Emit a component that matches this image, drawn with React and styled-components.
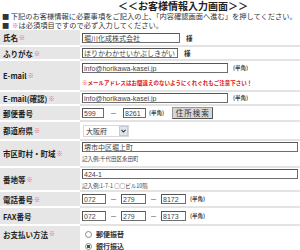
import React from 'react';
import styled, { createGlobalStyle } from 'styled-components';

const GlobalStyle = createGlobalStyle`
  html, body {
    margin: 0;
    padding: 0;
    background: #fff;
  }
  body {
    font-family: "Noto Sans CJK JP", sans-serif;
    color: #333;
  }
`;

const Page = styled.div`
  width: 300px;
  height: 250px;
  overflow: hidden;
`;

const Title = styled.h1`
  margin: 0;
  padding-left: 118px;
  font-size: 10px;
  line-height: 12px;
  font-weight: 700;
  color: #222;
  white-space: nowrap;
`;

const Lead = styled.p`
  margin: 0;
  padding-left: 2px;
  font-size: 7.25px;
  line-height: 9px;
  color: #333;
  white-space: nowrap;
`;

const Req = styled.span`
  color: #e8508a;
  font-size: ${p => p.$size || '6px'};
  margin-left: 1px;
`;

const Form = styled.div``;

const Row = styled.div`
  display: grid;
  grid-template-columns: 80px 1fr;
  height: ${p => p.$h}px;
`;

const Label = styled.div`
  box-sizing: border-box;
  background: #e6e6e6;
  border-bottom: 2px solid #fff;
  display: flex;
  align-items: ${p => (p.$top ? 'flex-start' : 'center')};
  padding: ${p => (p.$top ? '3px 0 0 3px' : '0 0 0 3px')};
  font-size: 7.5px;
  font-weight: 700;
  color: #1e1e1e;
  white-space: nowrap;
`;

const Cell = styled.div`
  box-sizing: border-box;
  border-bottom: 2px solid #e3e3e3;
  padding: ${p => p.$pad || '0 0 0 2px'};
  display: flex;
  flex-direction: column;
  justify-content: ${p => (p.$top ? 'flex-start' : 'center')};
  min-width: 0;
`;

const Line = styled.div`
  display: flex;
  align-items: center;
  white-space: nowrap;
  height: ${p => p.$h || 10}px;
`;

const Field = styled.input`
  box-sizing: border-box;
  width: ${p => p.$w || '100px'};
  height: 10px;
  margin: 0;
  padding: 0 1px;
  border: 1px solid #6e6e6e;
  border-top-color: #555;
  border-left-color: #555;
  background: #fff;
  font-family: "Liberation Sans", "Noto Sans CJK JP", sans-serif;
  font-size: 7px;
  color: #444;
  outline: none;
`;

const Sama = styled.span`
  margin-left: 6px;
  font-size: 6.5px;
  font-weight: 700;
  color: #333;
`;

const Small = styled.span`
  margin-left: ${p => p.$ml || '5px'};
  font-size: 5.5px;
  font-weight: 700;
  color: #444;
`;

const Dash = styled.span`
  margin: 0 ${p => p.$m || '5px'};
  font-size: 7px;
  color: #333;
`;

const Hint = styled.div`
  margin-top: ${p => p.$mt || '3px'};
  font-size: 5.5px;
  line-height: 7px;
  color: ${p => (p.$warn ? '#e01010' : '#444')};
  font-weight: ${p => (p.$warn ? 700 : 400)};
  white-space: nowrap;
`;

const SearchButton = styled.button`
  box-sizing: border-box;
  margin-left: 8px;
  width: 41px;
  height: 12px;
  padding: 0;
  background: #d6d6d6;
  border: 1px solid #555;
  border-top-color: #999;
  border-left-color: #999;
  font-family: "Noto Sans CJK JP", sans-serif;
  font-size: 7.5px;
  line-height: 10px;
  color: #333;
  letter-spacing: 1px;
`;

const Select = styled.div`
  box-sizing: border-box;
  width: 46px;
  height: 12px;
  margin-left: 1px;
  display: flex;
  align-items: center;
  justify-content: space-between;
  border: 1px solid #d8d8d8;
  background: #fff;
  font-size: 7px;
  color: #333;
  padding-left: 2px;
`;

const Arrow = styled.span`
  box-sizing: border-box;
  width: 9px;
  height: 10px;
  display: flex;
  align-items: center;
  justify-content: center;
  background: #dfe4ee;
  border: 1px solid #c4cad6;
`;

const Radios = styled.div`
  display: flex;
  flex-direction: column;
  gap: 4px;
  padding: 4px 0 0 3px;
`;

const RadioLine = styled.label`
  display: flex;
  align-items: center;
  height: 8px;
  font-size: 7px;
  font-weight: 700;
  color: #333;
`;

const Dot = styled.span`
  box-sizing: border-box;
  width: 7px;
  height: 7px;
  margin-right: 4px;
  border-radius: 50%;
  border: 1px solid #8a8a8a;
  background: ${p =>
    p.$on ? 'radial-gradient(circle, #1e6b3a 0 1.5px, #fff 2px)' : '#fff'};
`;

const Text = ({ children, w }) => <Field $w={w} value={children} readOnly />;

export default function App() {
  return (
    <Page>
      <GlobalStyle />
      <Title>＜＜お客様情報入力画面＞＞</Title>
      <Lead>■ 下記のお客様情報に必要事項をご記入の上、「内容確認画面へ進む」を押してください。</Lead>
      <Lead>■ <Req $size="6.5px">※</Req>は必須項目ですので必ず入力してください。</Lead>

      <Form>
        <Row $h={17}>
          <Label>氏名<Req>※</Req></Label>
          <Cell>
            <Line><Text w="98px">堀川化成株式会社</Text><Sama>様</Sama></Line>
          </Cell>
        </Row>
        <Row $h={14}>
          <Label>ふりがな<Req>※</Req></Label>
          <Cell>
            <Line><Text w="96px">ほりかわかせいかぶしきがいしゃ</Text><Sama>様</Sama></Line>
          </Cell>
        </Row>
        <Row $h={31}>
          <Label>E-mail<Req>※</Req></Label>
          <Cell $top $pad="2px 0 0 2px">
            <Line><Text w="146px">info@horikawa-kasei.jp</Text><Small>(半角)</Small></Line>
            <Hint $warn $mt="7px">※メールアドレスはお間違えのないようにくれぐれもご注意下さい！</Hint>
          </Cell>
        </Row>
        <Row $h={14}>
          <Label>E-mail(確認)<Req>※</Req></Label>
          <Cell>
            <Line><Text w="146px">info@horikawa-kasei.jp</Text><Small>(半角)</Small></Line>
          </Cell>
        </Row>
        <Row $h={16}>
          <Label>郵便番号</Label>
          <Cell>
            <Line $h={12}>
              <Text w="22px">599</Text>
              <Dash $m="6px">－</Dash>
              <Text w="23px">8261</Text>
              <Small $ml="3px">(半角)</Small>
              <SearchButton type="button">住所検索</SearchButton>
            </Line>
          </Cell>
        </Row>
        <Row $h={19}>
          <Label>都道府県<Req>※</Req></Label>
          <Cell>
            <Line $h={12}>
              <Select>
                大阪府
                <Arrow>
                  <svg width="5" height="4" viewBox="0 0 5 4">
                    <path d="M0.5 0.8 L2.5 3 L4.5 0.8" fill="none" stroke="#333" strokeWidth="1.1" />
                  </svg>
                </Arrow>
              </Select>
            </Line>
          </Cell>
        </Row>
        <Row $h={27}>
          <Label>市区町村・町域<Req>※</Req></Label>
          <Cell $top $pad="1px 2px 0 2px">
            <Line><Text w="100%">堺市中区堀上町</Text></Line>
            <Hint $mt="4px">記入例:千代田区永田町</Hint>
          </Cell>
        </Row>
        <Row $h={24}>
          <Label>番地等<Req>※</Req></Label>
          <Cell $top $pad="1px 2px 0 2px">
            <Line><Text w="100%">424-1</Text></Line>
            <Hint $mt="4px">記入例:1-7-1 ○○ビル10階</Hint>
          </Cell>
        </Row>
        <Row $h={16}>
          <Label>電話番号<Req>※</Req></Label>
          <Cell>
            <Line>
              <Text w="24px">072</Text>
              <Dash $m="4px">－</Dash>
              <Text w="25px">279</Text>
              <Dash $m="4px">－</Dash>
              <Text w="25px">8172</Text>
              <Small $ml="4px">(半角)</Small>
            </Line>
          </Cell>
        </Row>
        <Row $h={18}>
          <Label>FAX番号</Label>
          <Cell>
            <Line>
              <Text w="24px">072</Text>
              <Dash $m="4px">－</Dash>
              <Text w="25px">279</Text>
              <Dash $m="4px">－</Dash>
              <Text w="25px">8173</Text>
              <Small $ml="4px">(半角)</Small>
            </Line>
          </Cell>
        </Row>
        <Row $h={30}>
          <Label $top>お支払い方法<Req>※</Req></Label>
          <Cell $top>
            <Radios>
              <RadioLine><Dot />郵便振替</RadioLine>
              <RadioLine><Dot $on />銀行振込</RadioLine>
            </Radios>
          </Cell>
        </Row>
      </Form>
    </Page>
  );
}
